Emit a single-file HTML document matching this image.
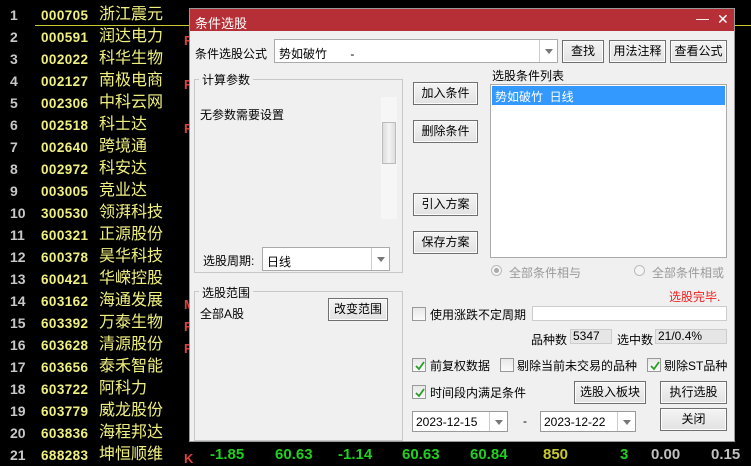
<!DOCTYPE html>
<html><head><meta charset="utf-8"><style>
*{margin:0;padding:0;box-sizing:border-box}
body{width:751px;height:465px;background:#000;position:relative;overflow:hidden;font-family:"Liberation Sans","Noto Sans CJK SC",sans-serif;font-size:12px}
.a{position:absolute;white-space:nowrap}
.n{color:#c8c8c8;font-size:14px;font-weight:bold}
.c{color:#f0f080;font-size:13.5px;font-weight:bold;letter-spacing:0.4px}
.nm{color:#f0f080;font-size:16px;line-height:18px}
.dlg{position:absolute;left:189px;top:8px;width:546px;height:434px;background:#f0f0f0;border:1px solid #999}
.t{position:absolute;left:0;top:0;width:100%;height:22px;background:#b62f36;color:#fff}
.b{position:absolute;border:1px solid #707070;background:linear-gradient(#f4f4f4,#e2e2e2);text-align:center;font-size:12px;color:#000;box-shadow:inset 0 0 0 1px #fcfcfc}
.box{position:absolute;background:#fff;border:1px solid #aaa}
.g{position:absolute;border:1px solid #c8c8c8}
.cb{position:absolute;width:14px;height:14px;border:1px solid #999;background:linear-gradient(#e8e8e8,#fafafa)}
.cb svg{position:absolute;left:1px;top:1px}
.arr{position:absolute;right:0;top:0;bottom:0;width:18px;border-left:1px solid #ccc}
.arr:after{content:"";position:absolute;left:5px;top:50%;margin-top:-2px;border:4px solid transparent;border-top:5px solid #777}
.d{font-size:12px;color:#000}
</style></head><body>

<div class="a" style="left:35px;top:25px;width:154px;height:1px;background:#c8c830"></div>
<div class="a" style="left:735px;top:25px;width:16px;height:1px;background:#c8c830"></div>

<div id="rows"></div>
<script>
var d=[["1","000705","浙江震元"],["2","000591","润达电力"],["3","002022","科华生物"],["4","002127","南极电商"],["5","002306","中科云网"],["6","002518","科士达"],["7","002640","跨境通"],["8","002972","科安达"],["9","003005","竞业达"],["10","300530","领湃科技"],["11","600321","正源股份"],["12","600378","昊华科技"],["13","600421","华嵘控股"],["14","603162","海通发展"],["15","603392","万泰生物"],["16","603628","清源股份"],["17","603656","泰禾智能"],["18","603722","阿科力"],["19","603779","威龙股份"],["20","603836","海程邦达"],["21","688283","坤恒顺维"]];
var h="";d.forEach(function(r,i){var y=7+i*22;h+='<div class="a n" style="left:10px;top:'+y+'px">'+r[0]+'</div><div class="a c" style="left:41px;top:'+(y+1)+'px">'+r[1]+'</div><div class="a nm" style="left:99px;top:'+(y-1)+'px">'+r[2]+'</div>';});
[[2,"R"],[4,"R"],[6,"R"],[14,"M"],[15,"R"],[16,"R"],[21,"K"]].forEach(function(r){h+='<div class="a" style="left:184px;top:'+(7+(r[0]-1)*22+4)+'px;color:#e04040;font-weight:bold;font-size:13px">'+r[1]+'</div>';});
document.getElementById("rows").innerHTML=h;
</script>
<div class="a" style="left:210px;top:446px;color:#20d020;font-size:15px;font-weight:bold">-1.85</div>
<div class="a" style="left:275px;top:446px;color:#20d020;font-size:15px;font-weight:bold">60.63</div>
<div class="a" style="left:338px;top:446px;color:#20d020;font-size:15px;font-weight:bold">-1.14</div>
<div class="a" style="left:402px;top:446px;color:#20d020;font-size:15px;font-weight:bold">60.63</div>
<div class="a" style="left:470px;top:446px;color:#20d020;font-size:15px;font-weight:bold">60.84</div>
<div class="a" style="left:543px;top:446px;color:#c8c830;font-size:15px;font-weight:bold">850</div>
<div class="a" style="left:620px;top:446px;color:#20d020;font-size:15px;font-weight:bold">3</div>
<div class="a" style="left:651px;top:446px;color:#c0c0c0;font-size:15px;font-weight:bold">0.00</div>
<div class="a" style="left:711px;top:446px;color:#c0c0c0;font-size:15px;font-weight:bold">0.15</div>

<div class="dlg">
 <div class="t"><span class="a" style="left:5px;top:4px;font-size:13px">条件选股</span><span class="a" style="left:506px;top:2px;font-size:13px">—</span><span class="a" style="left:527px;top:2px;font-size:14px">✕</span></div>
 <div class="a d" style="left:5px;top:36px">条件选股公式</div>
 <div class="box" style="left:84px;top:30px;width:284px;height:24px"><span class="a" style="left:4px;top:5px">势如破竹&nbsp;&nbsp;&nbsp;&nbsp;&nbsp;&nbsp;&nbsp;-</span><div class="arr"></div></div>
 <div class="b" style="left:372px;top:31px;width:42px;height:23px;line-height:21px">查找</div>
 <div class="b" style="left:419px;top:31px;width:57px;height:23px;line-height:21px">用法注释</div>
 <div class="b" style="left:480px;top:31px;width:57px;height:23px;line-height:21px">查看公式</div>

 <div class="g" style="left:4px;top:70px;width:209px;height:194px"></div>
 <div class="a d" style="left:9px;top:62px;background:#f0f0f0;padding:0 3px">计算参数</div>
 <div class="a d" style="left:10px;top:97px">无参数需要设置</div>
 <div class="a" style="left:191px;top:88px;width:16px;height:122px;background:#f6f6f6"><div style="position:absolute;left:1px;top:25px;width:14px;height:42px;background:linear-gradient(90deg,#ddd,#f4f4f4,#ddd);border:1px solid #bbb"></div></div>
 <div class="a d" style="left:13px;top:243px">选股周期:</div>
 <div class="box" style="left:72px;top:238px;width:128px;height:24px"><span class="a" style="left:4px;top:5px">日线</span><div class="arr"></div></div>

 <div class="b" style="left:223px;top:73px;width:65px;height:23px;line-height:21px">加入条件</div>
 <div class="b" style="left:223px;top:111px;width:65px;height:23px;line-height:21px">删除条件</div>
 <div class="b" style="left:223px;top:184px;width:65px;height:23px;line-height:21px">引入方案</div>
 <div class="b" style="left:223px;top:222px;width:65px;height:23px;line-height:21px">保存方案</div>

 <div class="a d" style="left:302px;top:58px">选股条件列表</div>
 <div class="box" style="left:300px;top:75px;width:237px;height:174px"><div style="position:absolute;left:1px;top:1px;right:1px;height:19px;background:#3399ff;color:#fff;padding:2px 3px">势如破竹&nbsp;&nbsp;日线</div></div>
 <div class="a" style="left:301px;top:256px;width:11px;height:11px;border:1px solid #bbb;border-radius:50%;background:#f4f4f4"><div style="position:absolute;left:2px;top:2px;width:5px;height:5px;border-radius:50%;background:#aaa"></div></div>
 <div class="a" style="left:319px;top:255px;color:#999">全部条件相与</div>
 <div class="a" style="left:444px;top:256px;width:11px;height:11px;border:1px solid #bbb;border-radius:50%;background:#f4f4f4"></div>
 <div class="a" style="left:462px;top:255px;color:#999">全部条件相或</div>
 <div class="a" style="left:479px;top:279px;color:#f02020">选股完毕.</div>

 <div class="g" style="left:4px;top:282px;width:209px;height:150px"></div>
 <div class="a d" style="left:9px;top:275px;background:#f0f0f0;padding:0 3px">选股范围</div>
 <div class="a d" style="left:10px;top:296px">全部A股</div>
 <div class="b" style="left:138px;top:289px;width:60px;height:23px;line-height:21px">改变范围</div>

 <div class="cb" style="left:222px;top:298px"></div>
 <div class="a d" style="left:240px;top:297px">使用涨跌不定周期</div>
 <div class="box" style="left:342px;top:297px;width:195px;height:15px;border-color:#ccc"></div>
 <div class="a d" style="left:341px;top:322px">品种数</div>
 <div class="a" style="left:380px;top:320px;width:42px;height:15px;background:#e6e6e6;border:1px solid #ccc;padding-left:2px;line-height:13px">5347</div>
 <div class="a d" style="left:427px;top:322px">选中数</div>
 <div class="a" style="left:465px;top:320px;width:72px;height:15px;background:#e6e6e6;border:1px solid #ccc;padding-left:2px;line-height:13px">21/0.4%</div>

 <div class="cb" style="left:222px;top:349px"><svg width="12" height="12"><path d="M2 6 L5 9 L10 2" stroke="#2a9d2a" stroke-width="1.8" fill="none"/></svg></div>
 <div class="a d" style="left:240px;top:348px">前复权数据</div>
 <div class="cb" style="left:310px;top:349px"></div>
 <div class="a d" style="left:327px;top:348px">剔除当前未交易的品种</div>
 <div class="cb" style="left:457px;top:349px"><svg width="12" height="12"><path d="M2 6 L5 9 L10 2" stroke="#2a9d2a" stroke-width="1.8" fill="none"/></svg></div>
 <div class="a d" style="left:474px;top:348px">剔除ST品种</div>

 <div class="cb" style="left:222px;top:376px"><svg width="12" height="12"><path d="M2 6 L5 9 L10 2" stroke="#2a9d2a" stroke-width="1.8" fill="none"/></svg></div>
 <div class="a d" style="left:240px;top:375px">时间段内满足条件</div>
 <div class="b" style="left:384px;top:372px;width:72px;height:23px;line-height:21px">选股入板块</div>
 <div class="b" style="left:470px;top:372px;width:67px;height:23px;line-height:21px">执行选股</div>

 <div class="box" style="left:222px;top:402px;width:96px;height:21px;border-color:#999"><span class="a" style="left:3px;top:3px;font-size:12px">2023-12-15</span><div class="arr"></div></div>
 <div class="a d" style="left:333px;top:405px">-</div>
 <div class="box" style="left:350px;top:402px;width:96px;height:21px;border-color:#999"><span class="a" style="left:3px;top:3px;font-size:12px">2023-12-22</span><div class="arr"></div></div>
 <div class="b" style="left:470px;top:399px;width:67px;height:23px;line-height:21px">关闭</div>
</div>
</body></html>
